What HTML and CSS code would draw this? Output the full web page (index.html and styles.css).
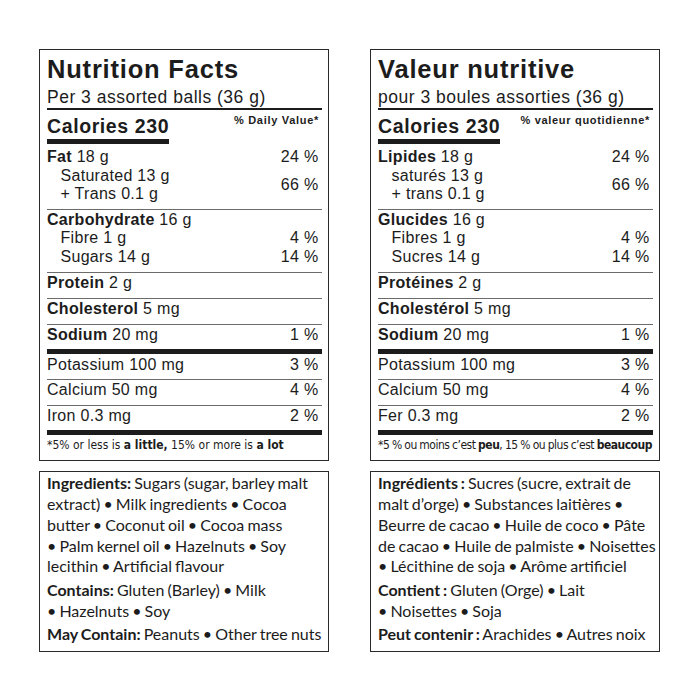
FILE: index.html
```html
<!DOCTYPE html>
<html lang="en">
<head>
<meta charset="utf-8">
<title>Nutrition Facts / Valeur nutritive</title>
<link rel="stylesheet" href="styles.css">
</head>
<body>
<main class="labels">
  <div class="col">
    <section class="facts">
      <h1 class="title">Nutrition Facts</h1>
      <p class="serving">Per 3 assorted balls (36 g)</p>
      <div class="cal-row"><span class="cal">Calories 230</span><span class="dv">% Daily Value*</span></div>
      <div class="sec sec-fat">
        <div class="row"><span><b>Fat</b> 18 g</span><span class="pct">24 %</span></div>
        <div class="row"><div class="sub"><span>Saturated 13 g</span><span>+ Trans 0.1 g</span></div><span class="pct">66 %</span></div>
      </div>
      <div class="sec">
        <div class="row"><span><b>Carbohydrate</b> 16 g</span></div>
        <div class="row"><span class="ind">Fibre 1 g</span><span class="pct">4 %</span></div>
        <div class="row"><span class="ind">Sugars 14 g</span><span class="pct">14 %</span></div>
      </div>
      <div class="sec">
        <div class="row"><span><b>Protein</b> 2 g</span></div>
      </div>
      <div class="sec">
        <div class="row"><span><b>Cholesterol</b> 5 mg</span></div>
      </div>
      <div class="sec sec-thick">
        <div class="row"><span><b>Sodium</b> 20 mg</span><span class="pct">1 %</span></div>
      </div>
      <div class="sec sec-pot">
        <div class="row"><span>Potassium 100 mg</span><span class="pct">3 %</span></div>
      </div>
      <div class="sec">
        <div class="row"><span>Calcium 50 mg</span><span class="pct">4 %</span></div>
      </div>
      <div class="sec sec-thick sec-last">
        <div class="row"><span>Iron 0.3 mg</span><span class="pct">2 %</span></div>
      </div>
      <p class="foot">*5% or less is <b>a little,</b> 15% or more is <b>a lot</b></p>
    </section>
    <section class="ingr">
      <p class="para">
        <b>Ingredients:</b> Sugars (sugar, barley malt<br>
        extract) • Milk ingredients • Cocoa<br>
        butter • Coconut oil • Cocoa mass<br>
        • Palm kernel oil • Hazelnuts • Soy<br>
        lecithin • Artificial flavour
      </p>
      <p class="para para-contains">
        <b>Contains:</b> Gluten (Barley) • Milk<br>
        • Hazelnuts • Soy
      </p>
      <p class="para para-may"><b>May Contain:</b> Peanuts • Other tree nuts</p>
    </section>
  </div>

  <div class="col">
    <section class="facts" lang="fr">
      <h1 class="title">Valeur nutritive</h1>
      <p class="serving">pour 3 boules assorties (36 g)</p>
      <div class="cal-row"><span class="cal">Calories 230</span><span class="dv">% valeur quotidienne*</span></div>
      <div class="sec sec-fat">
        <div class="row"><span><b>Lipides</b> 18 g</span><span class="pct">24 %</span></div>
        <div class="row"><div class="sub"><span>saturés 13 g</span><span>+ trans 0.1 g</span></div><span class="pct">66 %</span></div>
      </div>
      <div class="sec">
        <div class="row"><span><b>Glucides</b> 16 g</span></div>
        <div class="row"><span class="ind">Fibres 1 g</span><span class="pct">4 %</span></div>
        <div class="row"><span class="ind">Sucres 14 g</span><span class="pct">14 %</span></div>
      </div>
      <div class="sec">
        <div class="row"><span><b>Protéines</b> 2 g</span></div>
      </div>
      <div class="sec">
        <div class="row"><span><b>Cholestérol</b> 5 mg</span></div>
      </div>
      <div class="sec sec-thick">
        <div class="row"><span><b>Sodium</b> 20 mg</span><span class="pct">1 %</span></div>
      </div>
      <div class="sec sec-pot">
        <div class="row"><span>Potassium 100 mg</span><span class="pct">3 %</span></div>
      </div>
      <div class="sec">
        <div class="row"><span>Calcium 50 mg</span><span class="pct">4 %</span></div>
      </div>
      <div class="sec sec-thick sec-last">
        <div class="row"><span>Fer 0.3 mg</span><span class="pct">2 %</span></div>
      </div>
      <p class="foot foot-fr">*5 % ou moins c’est <b>peu</b>, 15 % ou plus c’est <b>beaucoup</b></p>
    </section>
    <section class="ingr" lang="fr">
      <p class="para">
        <b>Ingrédients&nbsp;:</b> Sucres (sucre, extrait de<br>
        malt d’orge) • Substances laitières •<br>
        Beurre de cacao • Huile de coco • Pâte<br>
        de cacao • Huile de palmiste • Noisettes<br>
        • Lécithine de soja • Arôme artificiel
      </p>
      <p class="para para-contains">
        <b>Contient&nbsp;:</b> Gluten (Orge) • Lait<br>
        • Noisettes • Soja
      </p>
      <p class="para para-may"><b>Peut contenir&nbsp;:</b> Arachides • Autres noix</p>
    </section>
  </div>
</main>
</body>
</html>
```

FILE: styles.css
```css
* {
  box-sizing: border-box;
}

html, body {
  margin: 0;
  padding: 0;
  background: #ffffff;
}

body {
  color: #1c1c1c;
  font-family: "Liberation Sans", Arial, sans-serif;
}

.labels {
  display: flex;
  gap: 41px;
  padding: 49px 0 0 39px;
}

.col {
  width: 290px;
  display: flex;
  flex-direction: column;
  gap: 10px;
}

.facts {
  border: 1px solid #2a2a2a;
  padding: 4.5px 6px 0 7px;
}

.title {
  margin: 0;
  font-size: 25.5px;
  line-height: 28px;
  font-weight: 700;
  letter-spacing: 0.8px;
}

.serving {
  margin: 4.7px 0 0;
  font-size: 17.5px;
  line-height: 20px;
  letter-spacing: 0.5px;
  padding-bottom: 1px;
  border-bottom: 2px solid #1c1c1c;
}

.cal-row {
  display: flex;
  justify-content: space-between;
  align-items: flex-start;
  padding-top: 3.5px;
}

.cal {
  margin-top: 1.2px;
  font-size: 19.5px;
  line-height: 22px;
  font-weight: 700;
  letter-spacing: 0.6px;
  padding-bottom: 2.4px;
  border-bottom: 5px solid #1c1c1c;
}

.dv {
  font-size: 11px;
  line-height: 13px;
  font-weight: 700;
  letter-spacing: 0.7px;
  padding-right: 3px;
}

.sec {
  font-size: 16px;
  line-height: 18.5px;
  letter-spacing: 0.3px;
  padding: 1px 0 5.5px;
  border-bottom: 1px solid #6b6b6b;
}

.sec-fat {
  margin-top: 3.2px;
  padding-bottom: 5px;
}

.sec-thick {
  border-bottom: 5px solid #1c1c1c;
  padding-bottom: 5px;
}

.sec-pot {
  padding: 2px 0 4.5px;
}

.sec-last {
  padding-bottom: 4.5px;
}

.row {
  display: flex;
  justify-content: space-between;
  align-items: center;
}

.sub {
  display: flex;
  flex-direction: column;
  padding-left: 13.5px;
}

.ind {
  padding-left: 13.5px;
}

.pct {
  padding-right: 3.5px;
}

.foot {
  margin: 0;
  padding: 3px 0 7px;
  font-family: "DejaVu Sans Condensed", "DejaVu Sans", sans-serif;
  font-stretch: condensed;
  font-size: 12px;
  line-height: 15px;
  letter-spacing: 0;
  white-space: nowrap;
}

.foot-fr {
  letter-spacing: -0.5px;
  word-spacing: -0.3px;
}

.ingr {
  border: 1px solid #2a2a2a;
  padding: 0.8px 6px 6px 7px;
  font-family: Lato, "Open Sans", sans-serif;
  font-size: 16px;
  line-height: 20.8px;
  word-spacing: -1px;
  color: #1c1c1c;
}

.para {
  margin: 0;
  white-space: nowrap;
}

.para b {
  font-weight: 700;
}

.para-contains {
  margin-top: 3px;
}

.para-may {
  margin-top: 2px;
}
```
